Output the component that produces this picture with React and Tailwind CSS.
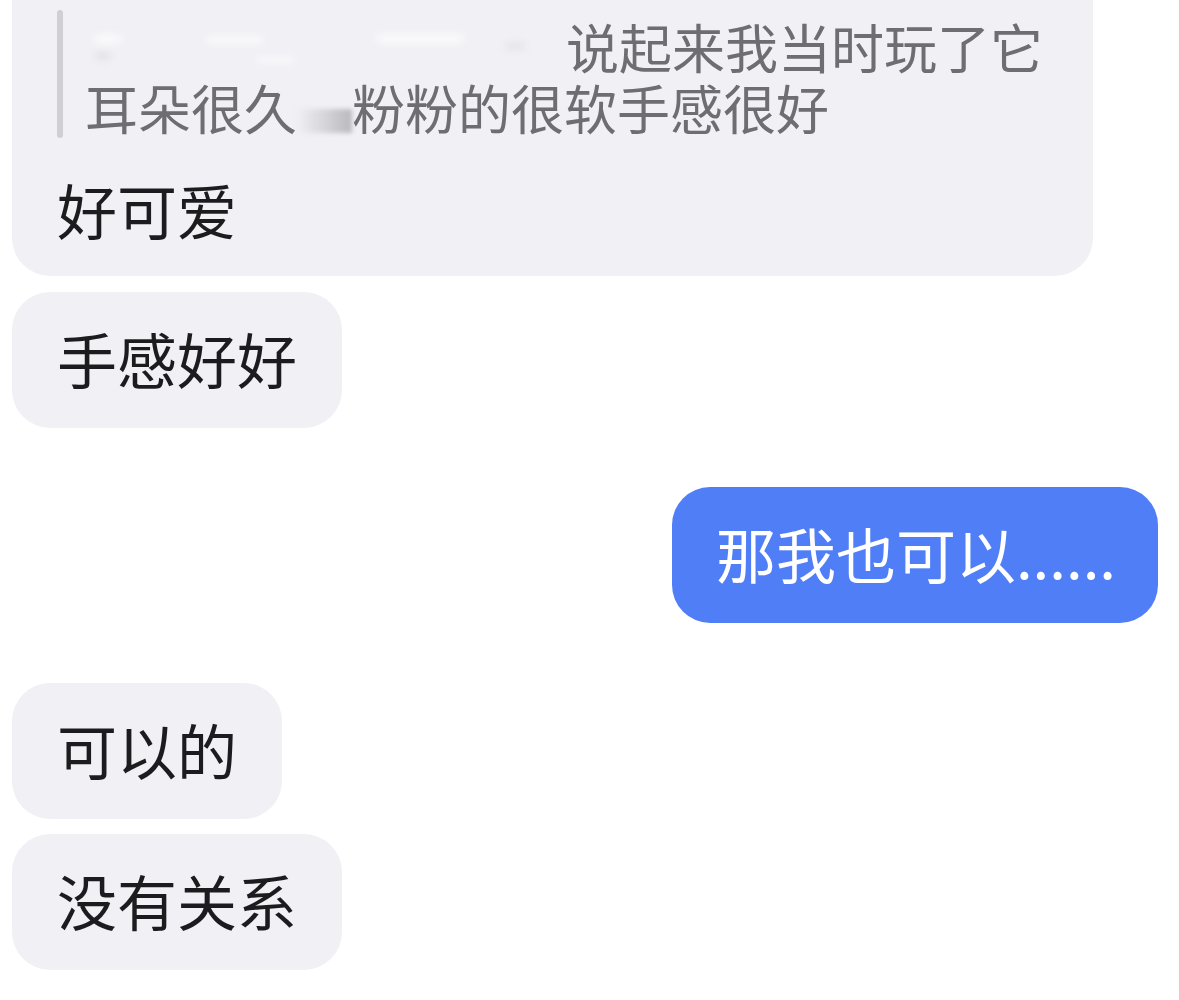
import React from "react";

const font = "font-['Noto_Sans_CJK_SC','Noto_Sans',sans-serif]";

const Bubble = ({ children, className = "" }) => (
  <div
    className={`self-start ml-[12px] rounded-[38px] bg-[#f0f0f5] px-[45px] pt-[27px] pb-[31px] text-[60px] leading-[78px] text-[#1c1c1e] whitespace-nowrap ${className}`}
  >
    {children}
  </div>
);

export default function App() {
  return (
    <div className={`w-[1179px] h-[1000px] overflow-hidden bg-white flex flex-col ${font}`}>
      {/* quoted reply bubble, top cut off */}
      <div className="self-start ml-[12px] -mt-[40px] w-[1081px] rounded-[38px] bg-[#f0f0f5] pt-[56px] pb-[28px] px-[45px]">
        <div className="flex">
          <div className="w-[6px] -mt-[6px] rounded-full bg-[#cfcfd4]" />
          <div className="ml-[22px] text-[53px] leading-[61px] text-[#6d6d72] whitespace-nowrap">
            <div className="flex items-center">
              {/* blurred-out name */}
              <span className="relative w-[481px] h-[61px] shrink-0">
                <span className="absolute left-[8px] top-[18px] w-[30px] h-[10px] rounded-full bg-white/70 blur-[4px]" />
                <span className="absolute left-[10px] top-[36px] w-[16px] h-[8px] rounded-full bg-[#e4e4e8] blur-[3px]" />
                <span className="absolute left-[120px] top-[20px] w-[60px] h-[8px] rounded-full bg-white/70 blur-[4px]" />
                <span className="absolute left-[170px] top-[40px] w-[40px] h-[8px] rounded-full bg-white/60 blur-[4px]" />
                <span className="absolute left-[290px] top-[18px] w-[90px] h-[10px] rounded-full bg-white/70 blur-[4px]" />
                <span className="absolute left-[420px] top-[26px] w-[20px] h-[8px] rounded-full bg-[#e6e6ea] blur-[3px]" />
              </span>
              <span>说起来我当时玩了它</span>
            </div>
            <div className="flex items-center">
              <span>耳朵很久</span>
              <span className="w-[55px] h-[24px] mt-[26px] shrink-0 bg-gradient-to-r from-[#f0f0f4] via-[#d6d6da] to-[#b9b9bd] blur-[2px]" />
              <span>粉粉的很软手感很好</span>
            </div>
          </div>
        </div>
        <div className="mt-[32px] text-[60px] leading-[78px] text-[#1c1c1e]">好可爱</div>
      </div>

      <Bubble className="mt-[16px]">手感好好</Bubble>

      <div className="self-end mr-[21px] mt-[59px] rounded-[38px] bg-[#4f7ef7] pl-[44px] pr-[42px] pt-[27px] pb-[31px] text-[60px] leading-[78px] text-white whitespace-nowrap">
        那我也可以......
      </div>

      <Bubble className="mt-[60px]">可以的</Bubble>
      <Bubble className="mt-[15px]">没有关系</Bubble>
    </div>
  );
}
